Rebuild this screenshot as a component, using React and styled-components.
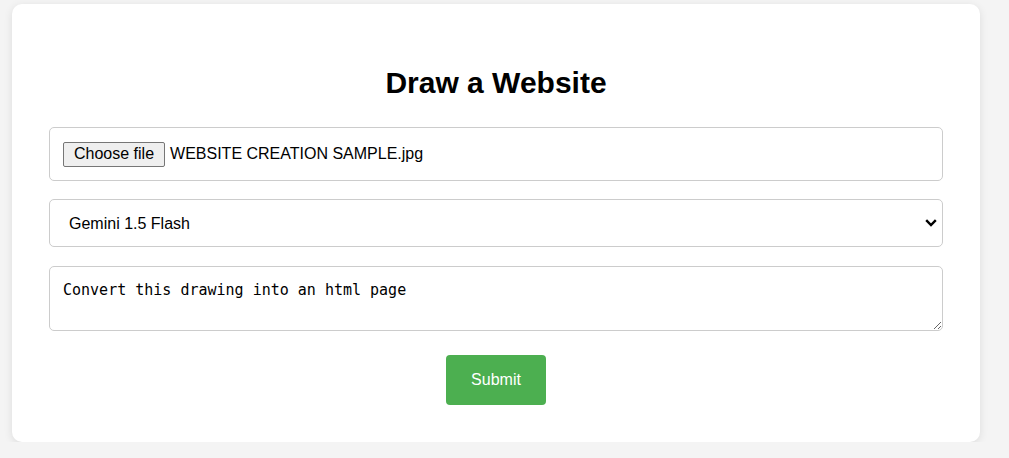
import React from 'react'
import styled, { createGlobalStyle } from 'styled-components'

const GlobalStyle = createGlobalStyle`
  html, body {
    margin: 0;
    padding: 0;
    background: #f4f4f4;
    font-family: "Liberation Sans", Arial, sans-serif;
  }
`

const Card = styled.div`
  box-sizing: border-box;
  width: 968px;
  margin: 4px 0 0 12px;
  padding: 37px;
  background: #fff;
  border-radius: 10px;
  box-shadow: 0 2px 8px rgba(0, 0, 0, 0.1);
`

const Title = styled.h1`
  margin: 25px 0 27px;
  text-align: center;
  font-size: 30px;
  font-weight: 700;
  color: #000;
`

const Form = styled.form`
  display: flex;
  flex-direction: column;
  gap: 18px;
`

const FileField = styled.div`
  box-sizing: border-box;
  width: 100%;
  height: 54px;
  display: flex;
  align-items: center;
  padding: 0 13px;
  border: 1px solid #ccc;
  border-radius: 5px;
  background: #fff;
  font-size: 16px;
  color: #000;
`

const ChooseButton = styled.button`
  font-family: "Liberation Sans", Arial, sans-serif;
  font-size: 16px;
  color: #000;
  height: 25px;
  padding: 0 10px;
  margin-right: 5px;
  background: #efefef;
  border: 1px solid #767676;
  border-radius: 2px;
`

const SelectWrap = styled.div`
  position: relative;
  width: 100%;
`

const Select = styled.select`
  box-sizing: border-box;
  width: 100%;
  height: 48px;
  padding: 0 19px;
  border: 1px solid #ccc;
  border-radius: 5px;
  background: #fff;
  appearance: none;
  font-family: "Liberation Sans", Arial, sans-serif;
  font-size: 16px;
  color: #000;
`

const Chevron = styled.svg`
  position: absolute;
  right: 6px;
  top: 20px;
  pointer-events: none;
`

const TextArea = styled.textarea`
  box-sizing: border-box;
  width: 100%;
  height: 65px;
  margin-top: 1px;
  padding: 14px 13px;
  border: 1px solid #ccc;
  border-radius: 5px;
  font-family: "DejaVu Sans Mono", "Liberation Mono", monospace;
  font-size: 15px;
  color: #000;
`

const SubmitButton = styled.button`
  align-self: center;
  width: 100px;
  height: 50px;
  margin-top: 6px;
  border: none;
  border-radius: 4px;
  background: #4caf50;
  color: #fff;
  font-family: "Liberation Sans", Arial, sans-serif;
  font-size: 16px;
  cursor: pointer;
`

export default function App() {
  return (
    <>
      <GlobalStyle />
      <Card>
        <Title>Draw a Website</Title>
        <Form onSubmit={e => e.preventDefault()}>
          <FileField>
            <ChooseButton type="button">Choose file</ChooseButton>
            <span>WEBSITE CREATION SAMPLE.jpg</span>
          </FileField>
          <SelectWrap>
            <Select defaultValue="flash">
              <option value="flash">Gemini 1.5 Flash</option>
              <option value="pro">Gemini 1.5 Pro</option>
            </Select>
            <Chevron width="12" height="8" viewBox="0 0 12 8">
              <path d="M1.2 1.2 L6 6 L10.8 1.2" fill="none" stroke="#000" strokeWidth="2.4" />
            </Chevron>
          </SelectWrap>
          <TextArea defaultValue="Convert this drawing into an html page" />
          <SubmitButton type="submit">Submit</SubmitButton>
        </Form>
      </Card>
    </>
  )
}
